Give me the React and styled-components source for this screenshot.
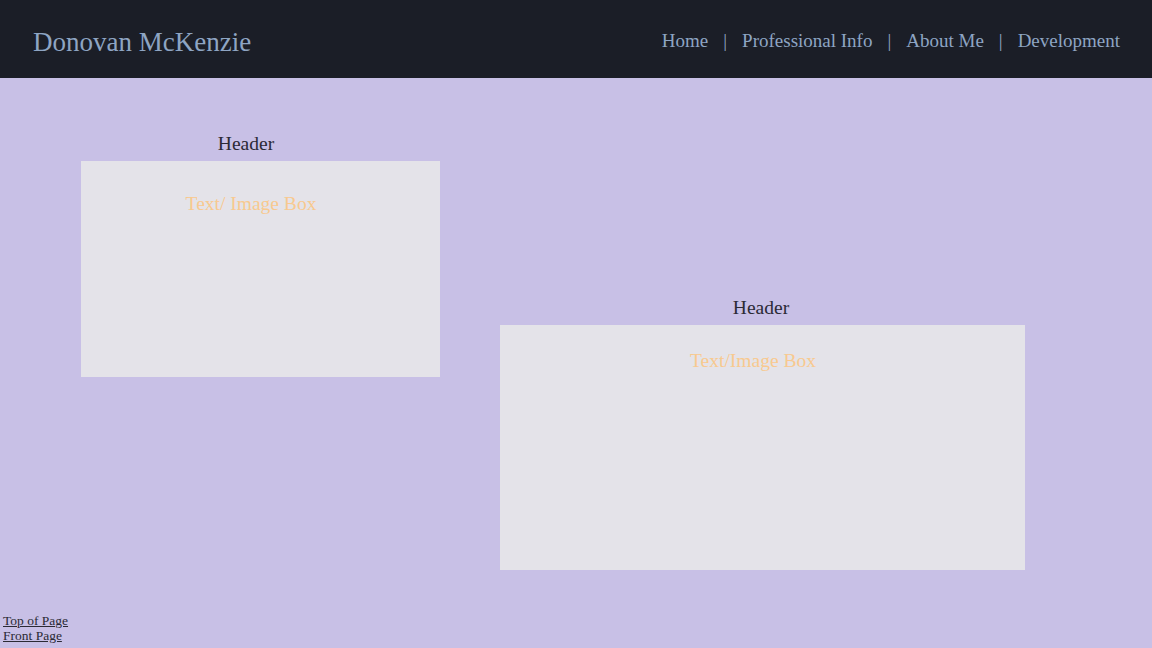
import React from 'react';
import styled, { createGlobalStyle } from 'styled-components';

const GlobalStyle = createGlobalStyle`
  html, body {
    margin: 0;
    padding: 0;
    background: #c8c0e6;
    font-family: 'Liberation Serif', 'DejaVu Serif', serif;
  }
`;

const Page = styled.div`
  min-height: 100vh;
  display: flex;
  flex-direction: column;
  background: #c8c0e6;
`;

const TopBar = styled.header`
  height: 78px;
  background: #1b1e27;
  display: flex;
  align-items: center;
  justify-content: space-between;
  padding: 0 32px 0 33px;
  box-sizing: border-box;
`;

const Title = styled.h1`
  margin: 0;
  padding-top: 6px;
  font-weight: normal;
  font-size: 27px;
  color: #8ea5c3;
`;

const Nav = styled.nav`
  display: flex;
  align-items: center;
  gap: 15px;
  padding-top: 3px;
  font-size: 19px;
  color: #8ea5c3;
`;

const NavLink = styled.a`
  color: inherit;
  text-decoration: none;
`;

const Sep = styled.span`
  color: #8ea5c3;
`;

const Main = styled.main`
  flex: 1;
  display: flex;
  align-items: flex-start;
  gap: 60px;
  padding: 54px 0 0 81px;
`;

const Section = styled.section`
  width: ${(p) => p.$width}px;
  margin-top: ${(p) => p.$offset || 0}px;
  display: flex;
  flex-direction: column;
`;

const SectionHeader = styled.h2`
  margin: 0 ${(p) => p.$shift || 0}px 6px 0;
  text-align: center;
  font-weight: normal;
  font-size: 19.5px;
  line-height: 23px;
  color: #2b2a35;
`;

const Box = styled.div`
  height: ${(p) => p.$height}px;
  background: #e4e3e9;
  box-sizing: border-box;
  padding-top: ${(p) => p.$pad}px;
  padding-right: ${(p) => p.$shift || 0}px;
  text-align: center;
  font-size: 19.5px;
  line-height: 22px;
  color: #f8c98f;
`;

const Footer = styled.footer`
  display: flex;
  flex-direction: column;
  padding: 0 0 5px 3px;
  font-size: 13.5px;
  line-height: 15px;
`;

const FootLink = styled.a`
  color: #2b2a35;
  text-decoration: underline;
  width: fit-content;
`;

const links = ['Home', 'Professional Info', 'About Me', 'Development'];

export default function App() {
  return (
    <Page>
      <GlobalStyle />
      <TopBar>
        <Title>Donovan McKenzie</Title>
        <Nav>
          {links.map((l, i) => (
            <React.Fragment key={l}>
              {i > 0 && <Sep>|</Sep>}
              <NavLink href="#">{l}</NavLink>
            </React.Fragment>
          ))}
        </Nav>
      </TopBar>
      <Main>
        <Section $width={359}>
          <SectionHeader $shift={29}>Header</SectionHeader>
          <Box $height={216} $pad={32} $shift={19}>Text/ Image Box</Box>
        </Section>
        <Section $width={525} $offset={164}>
          <SectionHeader $shift={3}>Header</SectionHeader>
          <Box $height={245} $pad={25} $shift={19}>Text/Image Box</Box>
        </Section>
      </Main>
      <Footer>
        <FootLink href="#">Top of Page</FootLink>
        <FootLink href="#">Front Page</FootLink>
      </Footer>
    </Page>
  );
}
